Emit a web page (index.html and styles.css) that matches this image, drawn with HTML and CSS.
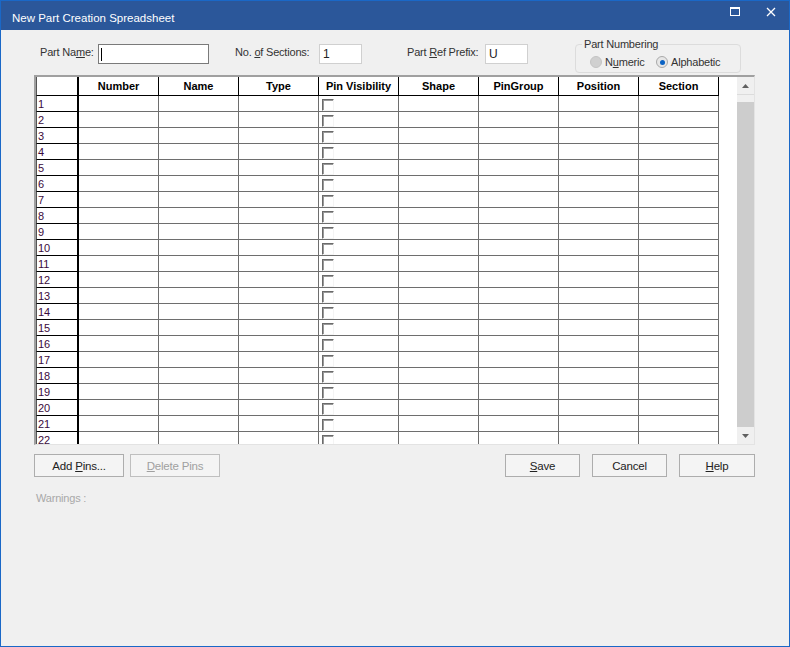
FILE: index.html
```html
<!DOCTYPE html>
<html lang="en">
<head>
    <meta charset="UTF-8">
    <title>New Part Creation Spreadsheet</title>
    <link rel="stylesheet" href="styles.css">
</head>
<body>
<div class="window">
    <div class="titlebar">
        <span class="title">New Part Creation Spreadsheet</span>
        <div class="caption-buttons">
            <svg class="cap-icon" width="10" height="10" viewBox="0 0 10 10">
                <rect x="0.5" y="0.5" width="9" height="8" fill="none" stroke="#fff"/>
                <line x1="0" y1="1.5" x2="10" y2="1.5" stroke="#fff"/>
            </svg>
            <svg class="cap-icon" width="10" height="10" viewBox="0 0 10 10">
                <path d="M1 1 L9 9 M9 1 L1 9" stroke="#fff" stroke-width="1.3"/>
            </svg>
        </div>
    </div>

    <div class="content">
        <div class="top-row">
            <label class="field-label lbl-name">Part Na<u>m</u>e:</label>
            <div class="textbox tb-name"><span class="caret"></span></div>

            <label class="field-label lbl-sections">No. <u>o</u>f Sections:</label>
            <div class="textbox tb-small">1</div>

            <label class="field-label lbl-prefix">Part <u>R</u>ef Prefix:</label>
            <div class="textbox tb-small">U</div>

            <div class="group">
                <span class="group-title">Part Numbering</span>
                <div class="radio-row">
                    <span class="opt opt-numeric"><i class="radio disabled"></i><span>N<u>u</u>meric</span></span>
                    <span class="opt"><i class="radio checked"></i><span>Alphabetic</span></span>
                </div>
            </div>
        </div>

        <div class="sheet">
            <div class="sheet-grid">
                <div class="hd corner"></div><div class="hd">Number</div><div class="hd">Name</div><div class="hd">Type</div><div class="hd">Pin Visibility</div><div class="hd">Shape</div><div class="hd">PinGroup</div><div class="hd">Position</div><div class="hd">Section</div>
                <div class="rh">1</div><div></div><div></div><div></div><div class="cb"><i></i></div><div></div><div></div><div></div><div></div>
                <div class="rh">2</div><div></div><div></div><div></div><div class="cb"><i></i></div><div></div><div></div><div></div><div></div>
                <div class="rh">3</div><div></div><div></div><div></div><div class="cb"><i></i></div><div></div><div></div><div></div><div></div>
                <div class="rh">4</div><div></div><div></div><div></div><div class="cb"><i></i></div><div></div><div></div><div></div><div></div>
                <div class="rh">5</div><div></div><div></div><div></div><div class="cb"><i></i></div><div></div><div></div><div></div><div></div>
                <div class="rh">6</div><div></div><div></div><div></div><div class="cb"><i></i></div><div></div><div></div><div></div><div></div>
                <div class="rh">7</div><div></div><div></div><div></div><div class="cb"><i></i></div><div></div><div></div><div></div><div></div>
                <div class="rh">8</div><div></div><div></div><div></div><div class="cb"><i></i></div><div></div><div></div><div></div><div></div>
                <div class="rh">9</div><div></div><div></div><div></div><div class="cb"><i></i></div><div></div><div></div><div></div><div></div>
                <div class="rh">10</div><div></div><div></div><div></div><div class="cb"><i></i></div><div></div><div></div><div></div><div></div>
                <div class="rh">11</div><div></div><div></div><div></div><div class="cb"><i></i></div><div></div><div></div><div></div><div></div>
                <div class="rh">12</div><div></div><div></div><div></div><div class="cb"><i></i></div><div></div><div></div><div></div><div></div>
                <div class="rh">13</div><div></div><div></div><div></div><div class="cb"><i></i></div><div></div><div></div><div></div><div></div>
                <div class="rh">14</div><div></div><div></div><div></div><div class="cb"><i></i></div><div></div><div></div><div></div><div></div>
                <div class="rh">15</div><div></div><div></div><div></div><div class="cb"><i></i></div><div></div><div></div><div></div><div></div>
                <div class="rh">16</div><div></div><div></div><div></div><div class="cb"><i></i></div><div></div><div></div><div></div><div></div>
                <div class="rh">17</div><div></div><div></div><div></div><div class="cb"><i></i></div><div></div><div></div><div></div><div></div>
                <div class="rh">18</div><div></div><div></div><div></div><div class="cb"><i></i></div><div></div><div></div><div></div><div></div>
                <div class="rh">19</div><div></div><div></div><div></div><div class="cb"><i></i></div><div></div><div></div><div></div><div></div>
                <div class="rh">20</div><div></div><div></div><div></div><div class="cb"><i></i></div><div></div><div></div><div></div><div></div>
                <div class="rh">21</div><div></div><div></div><div></div><div class="cb"><i></i></div><div></div><div></div><div></div><div></div>
                <div class="rh">22</div><div></div><div></div><div></div><div class="cb"><i></i></div><div></div><div></div><div></div><div></div>
            </div>
            <div class="sheet-gap"></div>
            <div class="vscroll">
                <div class="sb-btn">
                    <svg width="7" height="4" viewBox="0 0 7 4"><polygon points="0,4 3.5,0 7,4" fill="#606060"/></svg>
                </div>
                <div class="sb-track"></div>
                <div class="sb-thumb"></div>
                <div class="sb-btn">
                    <svg width="7" height="4" viewBox="0 0 7 4"><polygon points="0,0 7,0 3.5,4" fill="#606060"/></svg>
                </div>
            </div>
        </div>

        <div class="button-row">
            <button type="button" class="btn btn-wide">Add <u>P</u>ins...</button>
            <button type="button" class="btn btn-wide" disabled><u>D</u>elete Pins</button>
            <span class="spacer"></span>
            <button type="button" class="btn"><u>S</u>ave</button>
            <button type="button" class="btn">Cancel</button>
            <button type="button" class="btn btn-help"><u>H</u>elp</button>
        </div>

        <div class="warnings">Warnings :</div>
    </div>
</div>
</body>
</html>
```

FILE: styles.css
```css
body {
    margin: 0;
    background-color: #f0f0f0;
    font-family: "Liberation Sans", Arial, sans-serif;
}
.window {
    width: 790px;
    height: 647px;
    box-sizing: border-box;
    border: 1px solid #1a68c7;
    background-color: #f0f0f0;
    overflow: hidden;
}

/* title bar */
.titlebar {
    height: 29px;
    background-color: #2b579a;
    color: #fff;
    display: flex;
    justify-content: space-between;
}
.title {
    padding: 9px 0 0 11px;
    font-size: 11.5px;
    line-height: 16px;
}
.caption-buttons {
    display: flex;
    gap: 26px;
    padding: 6px 13px 0 0;
}
.cap-icon {
    display: block;
}

.content {
    padding: 0 34px 0 33px;
}

/* top fields */
.top-row {
    display: flex;
    align-items: flex-start;
    height: 29px;
    margin-top: 14px;
    font-size: 11px;
    letter-spacing: -0.2px;
    color: #333;
    white-space: nowrap;
}
.field-label {
    line-height: 14px;
    padding-top: 1px;
}
.lbl-name {
    width: 58px;
    margin-left: 6px;
}
.lbl-sections {
    width: 84px;
    margin-left: 26px;
}
.lbl-prefix {
    width: 78px;
    margin-left: 45px;
}
.textbox {
    height: 20px;
    box-sizing: border-box;
    border: 1px solid #d0d0d0;
    background-color: #fff;
    padding: 2px 0 0 3px;
    font-size: 12px;
    letter-spacing: 0;
    line-height: 15px;
    color: #222;
}
.tb-name {
    width: 111px;
    border-color: #7a7a7a;
    padding-left: 2px;
}
.tb-small {
    width: 43px;
}
.caret {
    display: block;
    width: 1px;
    height: 13px;
    margin-top: 1px;
    background-color: #000;
}

/* radio group */
.group {
    position: relative;
    width: 166px;
    height: 29px;
    box-sizing: border-box;
    margin-left: 47px;
    border: 1px solid #dcdcdc;
    border-radius: 4px;
}
.group-title {
    position: absolute;
    top: -8px;
    left: 6px;
    padding: 0 2px;
    background-color: #f0f0f0;
    line-height: 14px;
}
.radio-row {
    display: flex;
    margin-top: 10px;
    padding-left: 14px;
}
.opt {
    display: flex;
    align-items: center;
    gap: 3px;
    line-height: 14px;
}
.opt-numeric {
    width: 66px;
}
.radio {
    position: relative;
    width: 12px;
    height: 12px;
    box-sizing: border-box;
    border-radius: 50%;
    border: 1px solid #a9a9a9;
    background-color: #e6e6e6;
}
.radio.disabled {
    border-color: #c4c4c4;
    background-color: #d0d0d0;
}
.radio.checked::after {
    content: "";
    position: absolute;
    left: 2.5px;
    top: 2.5px;
    width: 5px;
    height: 5px;
    border-radius: 50%;
    background-color: #0a62c4;
}

/* spreadsheet */
.sheet {
    display: flex;
    height: 370px;
    box-sizing: border-box;
    margin-top: 2px;
    border-top: 2px solid #a0a0a0;
    border-left: 2px solid #a0a0a0;
    border-right: 1px solid #e3e3e3;
    border-bottom: 1px solid #e3e3e3;
    background-color: #fff;
}
.sheet-grid {
    display: grid;
    grid-template-columns: 43px repeat(8, 80px);
    grid-template-rows: 19px;
    grid-auto-rows: 16px;
    align-content: start;
    overflow: hidden;
    font-size: 11px;
}
.sheet-grid > div {
    box-sizing: border-box;
    border-right: 1px solid #6e6e6e;
    border-bottom: 1px solid #6e6e6e;
}
.sheet-grid > .hd {
    border-color: #000;
    font-weight: bold;
    text-align: center;
    line-height: 18px;
    color: #000;
}
.sheet-grid > .corner {
    border-left: 1px solid #555;
    border-right: 2px solid #000;
}
.sheet-grid > .rh {
    border-left: 1px solid #555;
    border-right: 2px solid #000;
    border-bottom-color: #000;
    padding: 1px 0 0 1px;
    line-height: 15px;
    color: #3a0a3c;
}
.cb i {
    display: block;
    width: 12px;
    height: 12px;
    box-sizing: border-box;
    margin: 3px 0 0 3px;
    border: 1px solid;
    border-color: #6a6a6a #f4f4f4 #f4f4f4 #6a6a6a;
    box-shadow: inset 1px 1px 0 #9a9a9a;
    background-color: #fff;
}
.sheet-gap {
    width: 18px;
}
.vscroll {
    width: 17px;
    display: flex;
    flex-direction: column;
    background-color: #f0f0f0;
}
.sb-btn {
    height: 17px;
    display: flex;
    align-items: center;
    justify-content: center;
    background-color: #f0f0f0;
}
.sb-btn svg {
    display: block;
}
.sb-track {
    height: 7px;
    border-top: 1px solid #dcdcdc;
}
.sb-thumb {
    flex: 1;
    background-color: #cdcdcd;
}

/* buttons */
.button-row {
    display: flex;
    margin-top: 9px;
    gap: 12px;
}
.spacer {
    flex: 1;
}
.btn {
    width: 75px;
    height: 23px;
    padding: 0;
    border: 1px solid #adadad;
    background-color: #f4f4f4;
    font-family: "Liberation Sans", sans-serif;
    font-size: 11.5px;
    letter-spacing: -0.2px;
    color: #222;
}
.btn-wide {
    width: 90px;
    margin-right: -6px;
}
.btn-help {
    width: 76px;
}
.btn:disabled {
    border-color: #bfbfbf;
    color: #a0a0a0;
}

.warnings {
    margin: 14px 0 0 2px;
    font-size: 11px;
    letter-spacing: -0.2px;
    line-height: 14px;
    color: #a8a8a8;
}
```
